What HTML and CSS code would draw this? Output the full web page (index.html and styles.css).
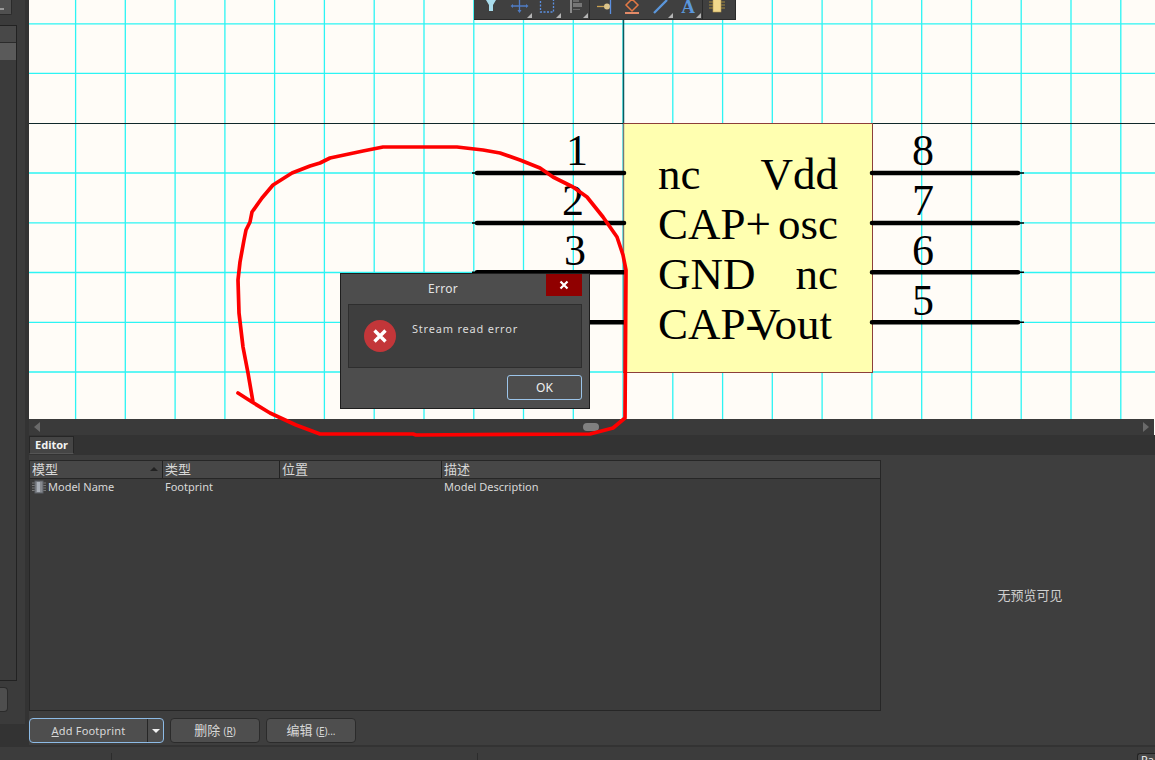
FILE: index.html
```html
<!DOCTYPE html>
<html lang="en">
<head>
    <meta charset="UTF-8">
    <title>Symbol Editor</title>
    <link rel="stylesheet" href="styles.css">
</head>
<body>
<div class="app">
    <div class="workspace">
        <div class="sidebar">
            <div class="side-top"><span class="side-dots"></span></div>
            <div class="side-list">
                <div class="side-item"></div>
                <div class="side-item side-item-on"></div>
            </div>
            <div class="side-btn"></div>
        </div>
        <div class="main">
            <div class="canvas">
                <svg class="sheet" viewBox="29 0 1126 419" width="1126" height="419">
                    <rect x="29" y="0" width="1126" height="419" fill="#fffcf7"/>
                    <path class="grid-line" d="M75.6 0V419M125.3 0V419M175.1 0V419M224.9 0V419M274.6 0V419M324.4 0V419M374.2 0V419M424 0V419M473.8 0V419M523.5 0V419M573.3 0V419M623 0V419M672.8 0V419M722.6 0V419M772.3 0V419M822.1 0V419M871.9 0V419M921.7 0V419M971.5 0V419M1021.2 0V419M1071 0V419M1120.8 0V419"/>
                    <path class="grid-line" d="M29 23.8H1155M29 73.4H1155M29 173H1155M29 222.8H1155M29 272.5H1155M29 322.3H1155M29 372H1155"/>
                    <line class="origin-v" x1="623.5" y1="0" x2="623.5" y2="123"/>
                    <line class="origin-h" x1="29" y1="123.5" x2="1155" y2="123.5"/>
                    <rect class="body" x="623.5" y="123.5" width="249" height="249"/>
                    <line class="edge" x1="623.5" y1="124" x2="623.5" y2="372"/>

                    <path class="pin" d="M477 173H624M477 223H624M477 272.200H624M477 322.200H624"/>
                    <path class="pin" d="M872 173H1018M872 223H1018M872 272.200H1018M872 322.200H1018"/>
                    <path class="pin-tip" d="M472 173H478M472 223H478M472 272.200H478M472 322.200H478M1017 173H1024M1017 223H1024M1017 272.200H1024M1017 322.200H1024"/>

                    <text class="pin-no" x="577" y="165">1</text>
                    <text class="pin-no" x="573" y="215">2</text>
                    <text class="pin-no" x="575" y="265">3</text>
                    <text class="pin-no" x="923" y="165">8</text>
                    <text class="pin-no" x="923" y="215">7</text>
                    <text class="pin-no" x="923" y="265">6</text>
                    <text class="pin-no" x="923" y="315">5</text>

                    <text class="label" x="658" y="189">nc</text>
                    <text class="label" x="658" y="239">CAP+</text>
                    <text class="label" x="658" y="289">GND</text>
                    <text class="label" x="658" y="339">CAP-</text>
                    <text class="label label-r" x="838" y="189">Vdd</text>
                    <text class="label label-r" x="838" y="239">osc</text>
                    <text class="label label-r" x="838" y="289">nc</text>
                    <text class="label label-r" x="832" y="339">Vout</text>
                </svg>

                <div class="toolbar">
                    <span class="tool">
                        <svg viewBox="0 0 28 20" width="28" height="20"><path d="M9 0H19L16 5V11H12V5Z" fill="#a9dcec"/></svg>
                    </span>
                    <span class="tool more">
                        <svg viewBox="0 0 28 20" width="28" height="20"><path d="M8 6H21M14.500 0V12" stroke="#4f7cc4" stroke-width="1.300" fill="none"/><path d="M12.500 10H16.500L14.500 13ZM8 4V8L5.500 6ZM21 4V8L23.500 6Z" fill="#4f7cc4"/></svg>
                    </span>
                    <span class="tool more">
                        <svg viewBox="0 0 28 20" width="28" height="20"><rect x="7.500" y="-2" width="13" height="14" fill="none" stroke="#5b8fe0" stroke-width="1.300" stroke-dasharray="2 1.500"/></svg>
                    </span>
                    <span class="tool more sep">
                        <svg viewBox="0 0 28 20" width="28" height="20"><path d="M8 0H10V13H8Z" fill="#8a8a8a"/><path d="M11 3H20V7H11Z" fill="#767676"/><path d="M11 0H17V2H11ZM11 9H18V10H11Z" fill="#6a6a6a"/></svg>
                    </span>
                    <span class="tool">
                        <svg viewBox="0 0 28 20" width="28" height="20"><path d="M7 6.500H14" stroke="#c9a050" stroke-width="1.300"/><circle cx="17" cy="6.500" r="3" fill="#dcc48a"/><path d="M20.500 0V14" stroke="#5b8fe0" stroke-width="1.300"/></svg>
                    </span>
                    <span class="tool">
                        <svg viewBox="0 0 28 20" width="28" height="20"><path d="M14 -1L20 5L14 11L8 5Z" fill="none" stroke="#e27845" stroke-width="1.500"/><path d="M7 12H21V14H7Z" fill="#e28a68"/></svg>
                    </span>
                    <span class="tool more">
                        <svg viewBox="0 0 28 20" width="28" height="20"><path d="M8 13L21 0" stroke="#5b97dc" stroke-width="2.300"/></svg>
                    </span>
                    <span class="tool more sep">
                        <svg viewBox="0 0 28 20" width="28" height="20"><text class="tool-a" x="14" y="13">A</text></svg>
                    </span>
                    <span class="tool">
                        <svg viewBox="0 0 28 20" width="28" height="20"><rect x="10" y="-1" width="8" height="13" fill="#f1d88c" stroke="#b99a50" stroke-width=".6"/><path d="M6 2H10M6 5H10M6 8H10M18 2H22M18 5H22M18 8H22" stroke="#a48a3c"/></svg>
                    </span>
                </div>
            </div>

            <div class="hscroll">
                <span class="arrow-left"></span>
                <span class="thumb"></span>
                <span class="arrow-right"></span>
            </div>

            <div class="tabs">
                <span class="tab">Editor</span>
            </div>

            <div class="panel">
                <div class="panel-left">
                    <div class="table">
                        <div class="row head">
                            <span class="cell">模型<i class="sort"></i></span>
                            <span class="cell">类型</span>
                            <span class="cell">位置</span>
                            <span class="cell">描述</span>
                        </div>
                        <div class="row">
                            <span class="cell name">
                                <svg viewBox="0 0 14 14" width="14" height="14">
                                    <path d="M0 3H3M0 5.500H3M0 8H3M0 10.500H3M11 3H14M11 5.500H14M11 8H14M11 10.500H14" stroke="#777"/>
                                    <rect x="3" y="1" width="8" height="12" fill="#85898f" stroke="#5d6066"/>
                                    <rect x="5" y="2" width="3" height="10" fill="#aab0b8"/>
                                </svg>
                                Model Name
                            </span>
                            <span class="cell">Footprint</span>
                            <span class="cell"></span>
                            <span class="cell">Model Description</span>
                        </div>
                    </div>
                    <div class="actions">
                        <div class="split">
                            <span class="split-main"><u>A</u>dd Footprint</span>
                            <span class="split-drop"><i class="caret"></i></span>
                        </div>
                        <span class="btn">删除 <small>(<u>R</u>)</small></span>
                        <span class="btn">编辑 <small>(<u>E</u>)...</small></span>
                    </div>
                </div>
                <div class="preview">无预览可见</div>
            </div>
        </div>
    </div>
    <div class="status">
        <span class="status-cell status-first"></span>
        <span class="status-cell status-second"></span>
        <span class="status-pa">Pa</span>
    </div>

    <div class="dialog">
        <div class="dialog-title">Error<span class="dialog-close">
            <svg viewBox="0 0 10 10" width="10" height="10"><path d="M1.500 1.500L8.500 8.500M8.500 1.500L1.500 8.500" stroke="#fff" stroke-width="2.200"/></svg>
        </span></div>
        <div class="dialog-body">
            <svg class="dialog-icon" viewBox="0 0 32 32" width="32" height="32">
                <circle cx="16" cy="16" r="16" fill="#c33639"/>
                <path d="M10.500 10.500L21.500 21.500M21.500 10.500L10.500 21.500" stroke="#fff" stroke-width="3.400"/>
            </svg>
            <span class="dialog-msg">Stream read error</span>
        </div>
        <div class="dialog-foot"><span class="ok">OK</span></div>
    </div>

    <svg class="scribble" viewBox="0 0 1155 760" width="1155" height="760">
        <path d="M238 393L252 402L270 413L296 425L320 434L413 434L416 435L590 434L613 428L625 418L626 270L623 255L617 237L603 217L587 197L573 187L553 177L540 168L520 160L500 153L483 150L457 147L383 147L363 151L330 158L320 163L310 166L292 173L273 185L262 198L252 212L250 222L246 230L244 240L240 262L238 280L239 313L243 347L248 373L253 402"/>
    </svg>
</div>
</body>
</html>
```

FILE: styles.css
```css
*{
    margin: 0;
    padding: 0;
    box-sizing: border-box;
}
body{
    background-color: #3c3c3c;
    font-family: "Noto Sans", "Noto Sans CJK SC", sans-serif;
    font-size: 11px;
    color: #d8d8d8;
    overflow: hidden;
}
.app{
    position: relative;
    display: flex;
    flex-direction: column;
    width: 1155px;
    height: 760px;
    overflow: hidden;
}
.workspace{
    display: flex;
    flex: 1;
    min-height: 0;
    background-color: #333;
}

/* left strip */
.sidebar{
    display: flex;
    flex-direction: column;
    width: 25px;
    height: 724px;
    margin-right: 4px;
    background-color: #3b3b3b;
}
.side-top{
    width: 12px;
    height: 15px;
    padding-top: 8px;
    background-color: #505050;
    border-bottom: 1px solid #2b2b2b;
    border-right: 1px solid #2b2b2b;
    border-bottom-right-radius: 2px;
}
.side-dots{
    display: block;
    width: 4px;
    height: 2px;
    background-color: #999;
}
.side-list{
    width: 17px;
    height: 656px;
    margin-top: 10px;
    border-top: 1px solid #222;
    border-right: 1px solid #222;
    border-bottom: 1px solid #222;
}
.side-item{
    height: 17px;
    background-color: #484848;
    border-bottom: 1px solid #2b2b2b;
}
.side-item-on{
    background-color: #5a5a5a;
    border-bottom: 0;
}
.side-btn{
    width: 8px;
    height: 25px;
    margin-top: 6px;
    background-color: #4e4e4e;
    border: 1px solid #2b2b2b;
    border-left: 0;
    border-radius: 0 4px 4px 0;
}

/* editor column */
.main{
    display: flex;
    flex-direction: column;
    flex: 1;
    min-width: 0;
}
.canvas{
    position: relative;
    height: 419px;
}
.sheet{
    display: block;
}
.grid-line{
    fill: none;
    stroke: #2cf4f4;
    stroke-width: 1.3;
}
.origin-v{
    stroke: #0c5a60;
    stroke-width: 1.5;
}
.origin-h{
    stroke: #10282a;
    stroke-width: 1;
}
.body{
    fill: #ffffb0;
    stroke: #8c3f3a;
    stroke-width: 1;
}
.edge{
    stroke: #777;
    stroke-width: 1.4;
}
.pin{
    fill: none;
    stroke: #000;
    stroke-width: 4.600;
    stroke-linecap: round;
}
.pin-tip{
    fill: none;
    stroke: #000;
    stroke-width: 1.600;
}
.pin-no{
    font-family: "Liberation Serif", serif;
    font-size: 44px;
    fill: #000;
    text-anchor: middle;
}
.label{
    font-family: "Liberation Serif", serif;
    font-size: 45px;
    fill: #000;
}
.label-r{
    text-anchor: end;
}

.toolbar{
    position: absolute;
    top: 0;
    left: 445px;
    display: flex;
    width: 262px;
    height: 20px;
    padding-left: 3px;
    background-color: #404040;
    border-bottom: 1px solid #2a2a2a;
    border-right: 1px solid #2a2a2a;
    overflow: hidden;
}
.tool{
    position: relative;
    display: block;
    flex: none;
    width: 28.200px;
    height: 19px;
}
.tool svg{
    display: block;
}
.tool.sep{
    border-right: 1px solid #2a2a2a;
}
.tool.more:after{
    content: "";
    position: absolute;
    right: 1px;
    bottom: 1px;
    border-style: solid;
    border-width: 0 0 5px 5px;
    border-color: transparent transparent #b4b4b4 transparent;
}
.tool-a{
    font-family: "Liberation Serif", serif;
    font-size: 19px;
    font-weight: bold;
    fill: #5b97dc;
    text-anchor: middle;
}

/* horizontal scroll bar */
.hscroll{
    display: flex;
    align-items: center;
    height: 16px;
    padding: 0 5px;
    background-color: #3a3a3a;
    border-right: 1px solid #fffcf7;
}
.arrow-left{
    border-style: solid;
    border-width: 5px 6px 5px 0;
    border-color: transparent #6a6a6a transparent transparent;
}
.arrow-right{
    margin-left: auto;
    border-style: solid;
    border-width: 5px 0 5px 6px;
    border-color: transparent transparent transparent #6a6a6a;
}
.thumb{
    width: 16px;
    height: 8px;
    margin-left: 543px;
    background-color: #808080;
    border-radius: 4px;
}

.tabs{
    height: 20px;
    padding-top: 1px;
    background-color: #333;
}
.tab{
    display: block;
    width: 45px;
    height: 18px;
    line-height: 16px;
    text-align: center;
    font-weight: bold;
    font-size: 11px;
    color: #f2f2f2;
    background-color: #454545;
    border: 1px solid #262626;
    border-bottom-color: #555;
}

/* models panel */
.panel{
    display: flex;
    flex: 1;
    min-height: 0;
    background-color: #3e3e3e;
}
.panel-left{
    display: flex;
    flex-direction: column;
    width: 852px;
    flex: none;
}
.table{
    height: 251px;
    margin-top: 5px;
    border: 1px solid #262626;
    background-color: #3b3b3b;
}
.row{
    display: grid;
    grid-template-columns: 132px 117px 162px 1fr;
    height: 17px;
    line-height: 16px;
}
.head{
    height: 18px;
    line-height: 16px;
    font-size: 13px;
    background-color: #474747;
    border-bottom: 1px solid #262626;
}
.head .cell{
    position: relative;
    padding-left: 2px;
}
.head .cell + .cell{
    border-left: 1px solid #222;
}
.cell{
    display: block;
    padding-left: 3px;
    white-space: nowrap;
}
.row .cell:nth-child(1){
    padding-left: 2px;
}
.name{
    display: flex;
    align-items: flex-start;
    gap: 2px;
}
.name svg{
    flex: none;
    margin-top: 1px;
}
.sort{
    position: absolute;
    top: 6px;
    right: 4px;
    border-style: solid;
    border-width: 0 4px 4px 4px;
    border-color: transparent transparent #222 transparent;
}
.actions{
    display: flex;
    gap: 6px;
    margin-top: 7px;
}
.split{
    display: flex;
    width: 135px;
    height: 25px;
    line-height: 23px;
    background-color: #4e4e4e;
    border: 1px solid #8dbbe6;
    border-radius: 4px;
}
.split-main{
    flex: 1;
    text-align: center;
    letter-spacing: .2px;
    border-right: 1px solid #262626;
}
.split-drop{
    display: flex;
    align-items: center;
    justify-content: center;
    width: 15px;
}
.caret{
    border-style: solid;
    border-width: 4px 4px 0 4px;
    border-color: #f2f2f2 transparent transparent transparent;
}
.btn{
    display: block;
    width: 90px;
    height: 25px;
    line-height: 23px;
    text-align: center;
    font-size: 13px;
    background-color: #4e4e4e;
    border: 1px solid #2b2b2b;
    border-radius: 4px;
}
.btn small{
    font-size: 10px;
}
.preview{
    flex: 1;
    padding: 5px 0 17px 24px;
    display: flex;
    align-items: center;
    justify-content: center;
    font-size: 13px;
    color: #cfcfcf;
}

/* status bar */
.status{
    position: relative;
    display: flex;
    flex: none;
    height: 15px;
    padding-left: 111px;
    background-color: #3c3c3c;
    border-top: 2px solid #333;
}
.status-cell{
    display: block;
    border-left: 1px solid #2c2c2c;
    margin-top: 6px;
}
.status-first{
    width: 366px;
}
.status-second{
    width: 1px;
}
.status-pa{
    position: absolute;
    top: 6px;
    right: 0;
    width: 18px;
    height: 14px;
    padding-left: 3px;
    line-height: 12px;
    color: #f0f0f0;
    background-color: #484848;
    border: 1px solid #222;
    border-right: 0;
    border-radius: 3px 0 0 0;
}

/* error popup */
.dialog{
    position: absolute;
    top: 273px;
    left: 340px;
    display: flex;
    flex-direction: column;
    width: 250px;
    height: 136px;
    background-color: #4d4d4d;
    border: 1px solid #1e1e1e;
}
.dialog-title{
    position: relative;
    height: 30px;
    line-height: 29px;
    padding-right: 44px;
    text-align: center;
    font-size: 12px;
    letter-spacing: .3px;
    color: #e4e4e4;
}
.dialog-close{
    position: absolute;
    top: 0;
    right: 7px;
    display: flex;
    align-items: center;
    justify-content: center;
    width: 36px;
    height: 22px;
    background-color: #900000;
}
.dialog-body{
    display: flex;
    height: 64px;
    margin: 0 7px;
    padding: 15px 0 0 15px;
    background-color: #3e3e3e;
    border: 1px solid #2e2e2e;
}
.dialog-icon{
    flex: none;
}
.dialog-msg{
    margin: 1px 0 0 16px;
    font-size: 11px;
    letter-spacing: .8px;
    color: #dcdcdc;
}
.dialog-foot{
    display: flex;
    justify-content: flex-end;
    padding: 7px 7px 0 0;
}
.ok{
    display: block;
    width: 75px;
    height: 25px;
    line-height: 23px;
    text-align: center;
    font-size: 12px;
    color: #f0f0f0;
    border: 1px solid #9cc5ea;
    border-radius: 3px;
}

.scribble{
    position: absolute;
    top: 0;
    left: 0;
    pointer-events: none;
}
.scribble path{
    fill: none;
    stroke: #fe0000;
    stroke-width: 3.700;
    stroke-linejoin: round;
    stroke-linecap: round;
}
```
